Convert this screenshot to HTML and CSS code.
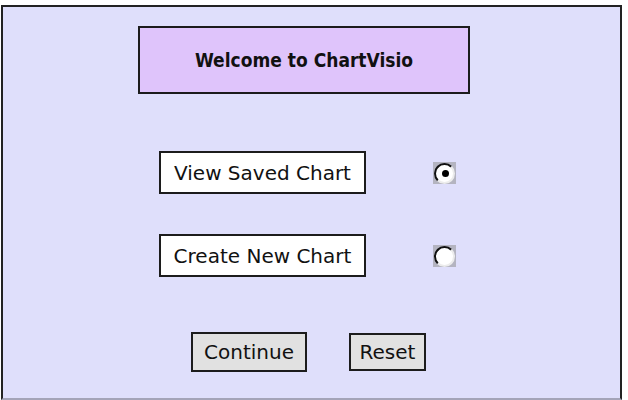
FILE: index.html
```html
<!DOCTYPE html>
<html lang="en">
<head>
    <meta charset="UTF-8">
    <title>ChartVisio</title>
    <link rel="stylesheet" href="styles.css">
</head>
<body>
    <div class="frame">
        <div class="welcome">Welcome to ChartVisio</div>

        <div class="option-row">
            <div class="option-label">View Saved Chart</div>
            <span class="radio checked"></span>
        </div>

        <div class="option-row second">
            <div class="option-label">Create New Chart</div>
            <span class="radio"></span>
        </div>

        <div class="actions">
            <button class="btn continue">Continue</button>
            <button class="btn reset">Reset</button>
        </div>
    </div>
</body>
</html>
```

FILE: styles.css
```css
body {
    margin: 0;
    padding: 0;
    background: #ffffff;
    font-family: 'DejaVu Sans', 'Liberation Sans', sans-serif;
    color: #111;
}

.frame {
    box-sizing: border-box;
    margin: 5px 6px 0 1px;
    height: 395px;
    border: 2px solid #222;
    border-bottom-color: #a4a4b8;
    background: #dfdffb;
}

.welcome {
    box-sizing: border-box;
    margin: 19px 0 0 135px;
    width: 332px;
    height: 68px;
    border: 2px solid #1c1c1c;
    background: #dfc4fb;
    display: flex;
    align-items: center;
    justify-content: center;
    font-family: 'DejaVu Sans Condensed', 'DejaVu Sans', sans-serif;
    font-weight: bold;
    font-size: 19px;
}

.option-row {
    display: flex;
    align-items: center;
    gap: 67px;
    margin-top: 57px;
    padding-left: 156px;
}

.option-row.second {
    margin-top: 40px;
}

.option-label {
    box-sizing: border-box;
    width: 207px;
    height: 43px;
    border: 2px solid #1c1c1c;
    background: #fff;
    display: flex;
    align-items: center;
    justify-content: center;
    font-size: 20px;
}

.radio {
    position: relative;
    box-sizing: border-box;
    width: 23px;
    height: 22px;
    background: #b4b4c0;
}

.radio::before {
    content: "";
    position: absolute;
    left: 1px;
    top: 1px;
    width: 21px;
    height: 21px;
    border-radius: 50%;
    background: #fff;
    box-sizing: border-box;
    border: 2px solid #ececec;
    border-top-color: #111;
    border-left-color: #111;
}

.radio.checked::after {
    content: "";
    position: absolute;
    left: 9px;
    top: 8px;
    width: 7px;
    height: 7px;
    border-radius: 50%;
    background: #000;
}

.actions {
    display: flex;
    align-items: center;
    gap: 42px;
    margin-top: 55px;
    padding-left: 188px;
}

.btn {
    box-sizing: border-box;
    font-family: inherit;
    font-size: 20px;
    color: #111;
    background: #e1e1e1;
    border: 2px solid #1c1c1c;
    padding: 0;
}

.continue {
    width: 116px;
    height: 40px;
}

.reset {
    width: 77px;
    height: 38px;
}
```
